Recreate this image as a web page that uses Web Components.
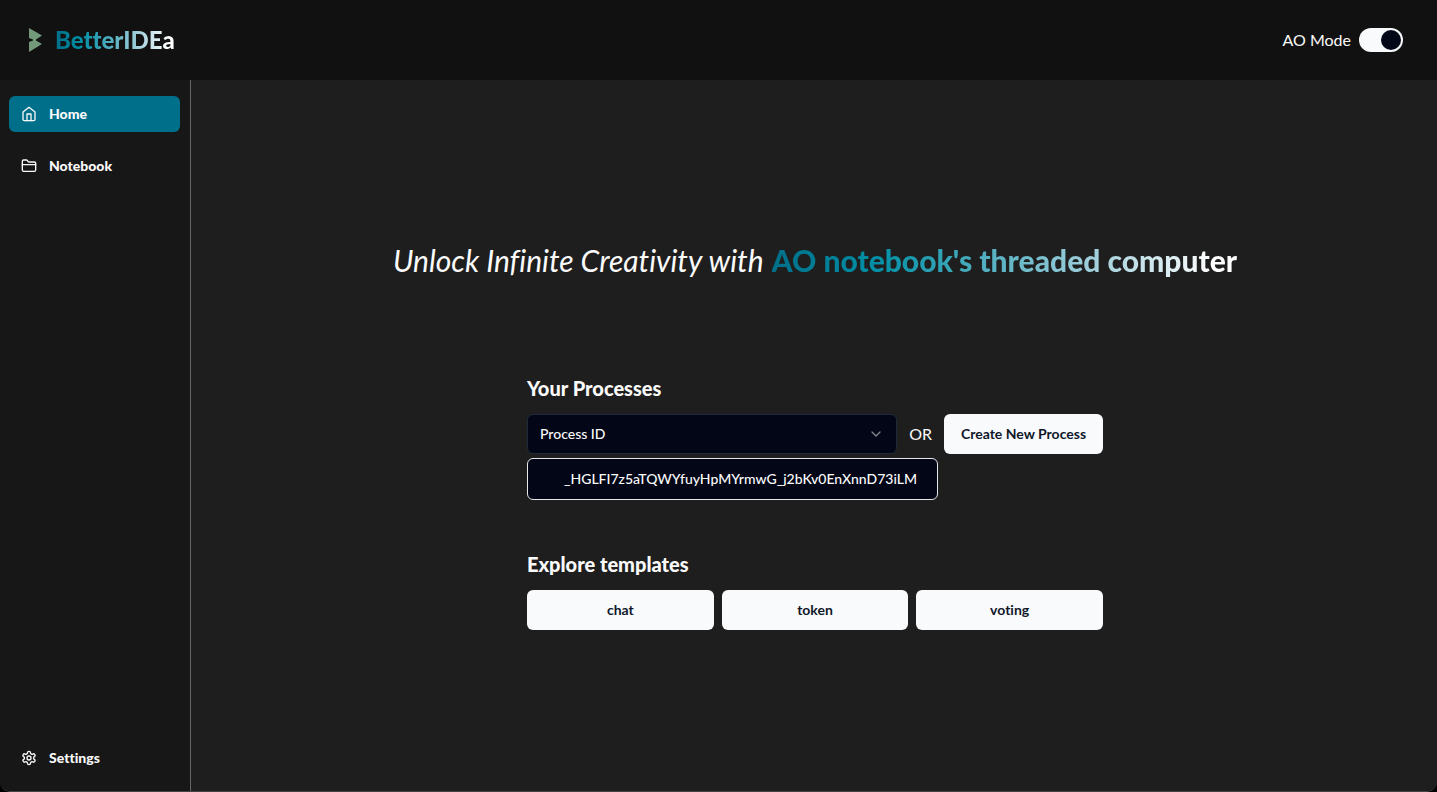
<!DOCTYPE html>
<html lang="en">
<head>
<meta charset="utf-8">
<title>BetterIDEa</title>
<style>
html, body { margin: 0; height: 100%; background: #000; }
body { font-family: Lato, "Open Sans", sans-serif; font-size: 16px; line-height: 24px; font-variant-ligatures: none; color: #fafafa; --brand: linear-gradient(90deg, #006f8a, #008fa5 22%, #a4d0dc 70%, #fff 95%); }
</style>
</head>
<body>
<idea-app></idea-app>
<script>
const define = (name, html, setup) => customElements.define(name, class extends HTMLElement {
  connectedCallback() {
    if (this.shadowRoot) return;
    this.attachShadow({ mode: 'open' }).innerHTML = '<style>*{box-sizing:border-box}:host{box-sizing:border-box}</style>' + html;
    if (setup) setup(this, this.shadowRoot);
  }
});

const icons = {
  home: '<path d="m3 9 9-7 9 7v11a2 2 0 0 1-2 2H5a2 2 0 0 1-2-2z"/><path d="M9 22V12h6v10"/>',
  folder: '<path d="M20 20a2 2 0 0 0 2-2V8a2 2 0 0 0-2-2h-7.9a2 2 0 0 1-1.69-.9L9.6 3.9A2 2 0 0 0 7.93 3H4a2 2 0 0 0-2 2v13a2 2 0 0 0 2 2Z"/><path d="M2 10h20"/>',
  settings: '<path d="M12.22 2h-.44a2 2 0 0 0-2 2v.18a2 2 0 0 1-1 1.73l-.43.25a2 2 0 0 1-2 0l-.15-.08a2 2 0 0 0-2.73.73l-.22.38a2 2 0 0 0 .73 2.73l.15.1a2 2 0 0 1 1 1.72v.51a2 2 0 0 1-1 1.74l-.15.09a2 2 0 0 0-.73 2.73l.22.38a2 2 0 0 0 2.73.73l.15-.08a2 2 0 0 1 2 0l.43.25a2 2 0 0 1 1 1.73V20a2 2 0 0 0 2 2h.44a2 2 0 0 0 2-2v-.18a2 2 0 0 1 1-1.73l.43-.25a2 2 0 0 1 2 0l.15.08a2 2 0 0 0 2.73-.73l.22-.39a2 2 0 0 0-.73-2.73l-.15-.08a2 2 0 0 1-1-1.74v-.5a2 2 0 0 1 1-1.74l.15-.09a2 2 0 0 0 .73-2.73l-.22-.38a2 2 0 0 0-2.73-.73l-.15.08a2 2 0 0 1-2 0l-.43-.25a2 2 0 0 1-1-1.73V4a2 2 0 0 0-2-2z"/><circle cx="12" cy="12" r="3"/>',
  chevron: '<path d="m6 9 6 6 6-6"/>'
};

define('idea-icon', `<style>
:host { display: block; width: 16px; height: 16px; flex: none; }
svg { display: block; width: 100%; height: 100%; fill: none; stroke: currentColor; stroke-width: 2; stroke-linecap: round; stroke-linejoin: round; }
</style><svg viewBox="0 0 24 24" aria-hidden="true"></svg>`,
(host, root) => { root.querySelector('svg').innerHTML = icons[host.getAttribute('name')] || ''; });

define('brand-text', `<style>
:host { display: inline-block; font-weight: 900; background: var(--brand); -webkit-background-clip: text; background-clip: text; color: transparent; }
</style><slot></slot>`);

define('idea-header', `<style>
:host { display: flex; align-items: center; justify-content: space-between; height: 80px; padding: 0 34px 0 28px; background: #111; }
a { display: flex; align-items: center; gap: 13px; text-decoration: none; font-size: 24px; line-height: 32px; }
svg { display: block; width: 14px; height: 24px; }
label { display: flex; align-items: center; gap: 8px; }
input { appearance: none; display: flex; align-items: center; width: 44px; height: 24px; margin: 0; padding: 2px; border-radius: 12px; background: #334155; }
input::before { content: ""; width: 20px; height: 20px; border-radius: 50%; background: #020817; }
input:checked { background: #f8fafc; justify-content: flex-end; }
</style>
<a href="#home"><svg viewBox="0 0 14 24" aria-hidden="true"><path fill="#71997a" d="M1 0 14 7.5 8 11.5v1l6 3.5L1 24V14l4-1.5v-1L1 10z"/></svg><brand-text>BetterIDEa</brand-text></a>
<label>AO Mode<input type="checkbox" role="switch" checked></label>`);

define('nav-item', `<style>
:host { display: block; }
a { display: flex; align-items: center; gap: 12px; height: 36px; padding: 0 12px; border-radius: 6px; color: #fafafa; font-size: 14px; line-height: 20px; font-weight: 900; text-decoration: none; }
:host([active]) a { background: #006f8a; }
</style><a href="#"><idea-icon></idea-icon><slot></slot></a>`,
(host, root) => {
  const icon = document.createElement('idea-icon');
  icon.setAttribute('name', host.getAttribute('icon'));
  root.querySelector('idea-icon').replaceWith(icon);
});

define('idea-sidebar', `<style>
:host { display: block; width: 191px; flex: none; padding: 16px 10px 15px 9px; background: #171717; border-right: 1px solid #666; }
nav { display: flex; flex-direction: column; gap: 16px; height: 100%; }
.last { margin-top: auto; }
</style><nav>
<nav-item icon="home" active>Home</nav-item>
<nav-item icon="folder">Notebook</nav-item>
<nav-item icon="settings" class="last">Settings</nav-item>
</nav>`);

define('idea-button', `<style>
:host { display: block; }
button { width: 100%; height: 40px; padding: 0 16px; border: 0; border-radius: 6px; background: #f8fafc; color: #0f172a; font: inherit; font-size: 14px; line-height: 20px; font-weight: 700; white-space: nowrap; }
</style><button type="button"><slot></slot></button>`);

define('process-picker', `<style>
:host { display: block; position: relative; }
select { appearance: none; display: block; width: 100%; height: 40px; padding: 0 12px; border: 1px solid #1e293b; border-radius: 6px; background: #020617; color: #fafafa; font: inherit; font-size: 14px; font-weight: 500; }
idea-icon { position: absolute; right: 13px; top: 12px; color: #85878c; pointer-events: none; }
.menu { position: absolute; top: 44px; left: 0; min-width: 411px; padding: 4px; border: 1px solid #e5e7eb; border-radius: 6px; background: #020617; }
.menu button { display: block; width: 100%; padding: 6px 8px 6px 32px; border: 0; background: none; color: #fafafa; font: inherit; font-size: 14px; line-height: 20px; font-weight: 500; text-align: left; white-space: nowrap; }
</style>
<select aria-label="Process ID"><option>Process ID</option></select>
<idea-icon name="chevron"></idea-icon>
<div class="menu" role="listbox" aria-label="Processes"><button type="button" role="option">_HGLFI7z5aTQWYfuyHpMYrmwG_j2bKv0EnXnnD73iLM</button></div>`);

define('idea-section', `<style>
:host { display: flex; flex-direction: column; gap: 12px; width: 100%; max-width: 576px; }
h2 { margin: 0; font-size: 20px; line-height: 28px; font-weight: 900; }
</style><h2></h2><slot></slot>`,
(host, root) => { root.querySelector('h2').textContent = host.getAttribute('heading'); });

define('idea-home', `<style>
:host { display: flex; flex: 1; min-width: 0; flex-direction: column; align-items: center; justify-content: center; gap: 96px; padding-left: 2px; background: #1e1e1e; }
h1 { display: flex; flex-wrap: wrap; justify-content: center; gap: 8px; margin: 0; font-size: 30px; line-height: 36px; font-weight: 400; }
.row { display: grid; grid-template-columns: 1fr auto minmax(159px, auto); align-items: center; gap: 12px; }
.grid { display: grid; grid-template-columns: repeat(3, 1fr); gap: 8px; }
</style>
<h1><i>Unlock Infinite Creativity with</i><brand-text>AO notebook's threaded computer</brand-text></h1>
<idea-section heading="Your Processes"><div class="row"><process-picker></process-picker><span>OR</span><idea-button>Create New Process</idea-button></div></idea-section>
<idea-section heading="Explore templates"><div class="grid"><idea-button>chat</idea-button><idea-button>token</idea-button><idea-button>voting</idea-button></div></idea-section>`);

define('idea-app', `<style>
:host { display: flex; flex-direction: column; min-height: 100vh; border-bottom: 1px solid #444; border-radius: 0 0 10px 10px; overflow: hidden; }
.body { display: flex; flex: 1; }
</style><idea-header></idea-header><div class="body"><idea-sidebar></idea-sidebar><idea-home></idea-home></div>`);
</script>
</body>
</html>
